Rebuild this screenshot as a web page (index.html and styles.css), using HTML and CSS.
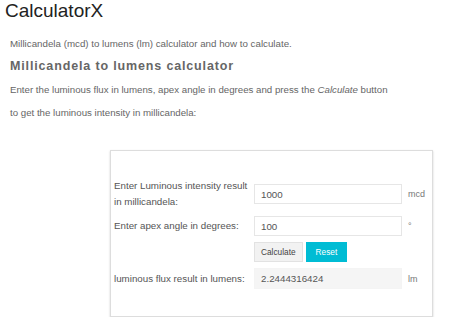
FILE: index.html
```html
<!DOCTYPE html>
<html>
<head>
<meta charset="utf-8">
<title>Millicandela to lumens calculator</title>
<link rel="stylesheet" href="styles.css">
</head>
<body>
<div class="logo">CalculatorX</div>

<div class="content">
<p class="intro">Millicandela (mcd) to lumens (lm) calculator and how to calculate.</p>

<h1>Millicandela to lumens calculator</h1>

<p class="howto">Enter the luminous flux in lumens, apex angle in degrees and press the <em>Calculate</em> button<br>
to get the luminous intensity in millicandela:</p>

<form class="calc" onsubmit="return false">
<label for="mcd">Enter Luminous intensity result in millicandela:</label>
<input id="mcd" type="text" value="1000">
<span class="unit">mcd</span>

<label for="angle">Enter apex angle in degrees:</label>
<input id="angle" type="text" value="100">
<span class="unit">°</span>

<span></span>
<div class="buttons">
<button type="button" class="btn">Calculate</button>
<button type="reset" class="btn reset">Reset</button>
</div>
<span></span>

<label for="lm">luminous flux result in lumens:</label>
<input id="lm" type="text" class="result" value="2.2444316424" readonly>
<span class="unit">lm</span>
</form>
</div>
</body>
</html>
```

FILE: styles.css
```css
body {
 margin: 0;
 background: #fff;
 font-family: "Liberation Sans", Arial, sans-serif;
 color: #666;
}

.logo {
 padding-left: 5px;
 font-size: 19px;
 line-height: 22px;
 color: #222;
}

.content {
 padding-left: 10px;
}

p.intro {
 margin: 14px 0 0 0;
 font-size: 9.75px;
 line-height: 16px;
}

h1 {
 margin: 6px 0 0 0;
 font-size: 12.5px;
 line-height: 16px;
 letter-spacing: .85px;
 color: #666;
}

p.howto {
 margin: 3.5px 0 0 0;
 font-size: 9.7px;
 line-height: 23px;
}

form.calc {
 display: grid;
 grid-template-columns: 136px 148px auto;
 column-gap: 4px;
 row-gap: 6px;
 align-items: center;
 width: 314px;
 margin: 26.5px 0 0 100px;
 padding: 27px 4px 27px 3px;
 border: 1px solid #ddd;
 box-shadow: 0 1px 2px rgba(0,0,0,.18);
 font-size: 9.75px;
 color: #555;
}

form.calc label {
 line-height: 16px;
}

form.calc input {
 box-sizing: border-box;
 height: 20px;
 margin: 0;
 padding: 0 6px;
 border: 1px solid #e6e6e6;
 font-family: inherit;
 font-size: 9.75px;
 color: #555;
 background: #fff;
}

form.calc input.result {
 height: 21px;
 border-color: #f4f4f4;
 background: #f5f5f5;
}

.unit {
 padding-left: 2px;
 font-size: 9px;
 color: #777;
}

.buttons {
 display: flex;
 gap: 3px;
}

.btn {
 height: 20px;
 margin: 0;
 padding: 0 6px;
 border: 1px solid #e2e2e2;
 background: #f2f2f2;
 font-family: inherit;
 font-size: 8.3px;
 color: #444;
}

.btn.reset {
 padding: 0 9px;
 border-color: #00bcd4;
 background: #00bcd4;
 color: #fff;
}
```
